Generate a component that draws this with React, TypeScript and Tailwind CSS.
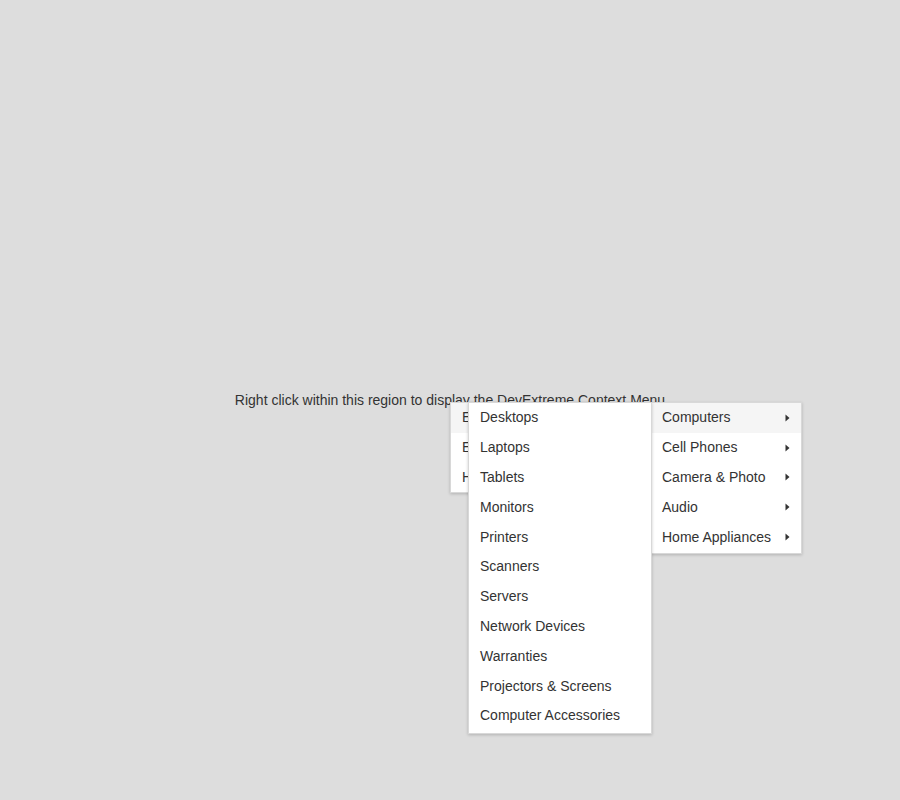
import React from "react";

const rootItems = ["Electronics", "Entertainment", "Home"];
const categories = ["Computers", "Cell Phones", "Camera & Photo", "Audio", "Home Appliances"];
const computers = [
  "Desktops",
  "Laptops",
  "Tablets",
  "Monitors",
  "Printers",
  "Scanners",
  "Servers",
  "Network Devices",
  "Warranties",
  "Projectors & Screens",
  "Computer Accessories",
];

function Arrow() {
  return (
    <svg width="5" height="8" viewBox="0 0 5 8" className="shrink-0">
      <path d="M0.5 0.5 L4.5 4 L0.5 7.5 Z" fill="#333" />
    </svg>
  );
}

export default function App() {
  return (
    <div
      className="relative h-screen w-full bg-[#dddddd] text-[14px] text-[#333]"
      style={{ fontFamily: '"Liberation Sans", Arial, sans-serif' }}
    >
      <div className="flex h-full items-center justify-center">
        <span>Right click within this region to display the DevExtreme Context Menu</span>
      </div>

      <div className="absolute left-[450px] top-[402px] w-[180px] border border-[#d8d8d8] bg-white shadow-[0_1px_3px_rgba(0,0,0,0.2)]">
        {rootItems.map((t, i) => (
          <div
            key={t}
            className={`flex h-[29.8px] items-center pl-[11px] ${i === 0 ? "bg-[#f5f5f5]" : ""}`}
          >
            {t}
          </div>
        ))}
      </div>

      <div className="absolute left-[651px] top-[402px] w-[151px] border border-[#d8d8d8] bg-white pb-px shadow-[0_1px_3px_rgba(0,0,0,0.2)]">
        {categories.map((t, i) => (
          <div
            key={t}
            className={`flex h-[29.8px] items-center justify-between pl-[10px] pr-[11px] ${i === 0 ? "bg-[#f5f5f5]" : ""}`}
          >
            <span>{t}</span>
            <Arrow />
          </div>
        ))}
      </div>

      <div className="absolute left-[468px] top-[402px] w-[184px] border border-[#d8d8d8] bg-white pb-[2px] shadow-[0_1px_3px_rgba(0,0,0,0.2)]">
        {computers.map((t) => (
          <div key={t} className="flex h-[29.8px] items-center pl-[11px]">
            {t}
          </div>
        ))}
      </div>
    </div>
  );
}
